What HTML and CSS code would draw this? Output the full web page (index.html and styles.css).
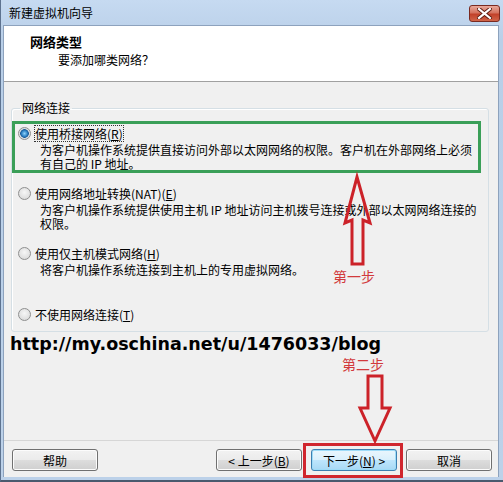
FILE: index.html
```html
<!DOCTYPE html>
<html lang="zh-CN">
<head>
    <meta charset="UTF-8">
    <title>新建虚拟机向导</title>
    <link rel="stylesheet" href="styles.css">
</head>
<body>
    <div class="window">
        <div class="titlebar">
            <span class="title">新建虚拟机向导</span>
            <span class="close">
                <svg width="15" height="11" viewBox="0 0 15 11">
                    <path d="M2 1 L13 10 M13 1 L2 10" stroke="#5a1a10" stroke-width="4" stroke-linecap="square"/>
                    <path d="M2 1 L13 10 M13 1 L2 10" stroke="#ffffff" stroke-width="2.2" stroke-linecap="square"/>
                </svg>
            </span>
        </div>
        <div class="client">
            <div class="header">
                <div class="header-title">网络类型</div>
                <div class="header-sub">要添加哪类网络？</div>
            </div>
            <div class="body">
                <fieldset class="group">
                    <legend>网络连接</legend>
                    <div class="option">
                        <div class="option-label"><span class="radio checked"></span><span class="focus">使用桥接网络(<u>R</u>)</span></div>
                        <div class="option-desc">
                            <div class="desc-line">为客户机操作系统提供直接访问外部以太网网络的权限。客户机在外部网络上必须</div>
                            <div class="desc-line">有自己的 IP 地址。</div>
                        </div>
                    </div>
                    <div class="option">
                        <div class="option-label"><span class="radio"></span><span>使用网络地址转换(NAT)(<u>E</u>)</span></div>
                        <div class="option-desc">
                            <div class="desc-line">为客户机操作系统提供使用主机 IP 地址访问主机拨号连接或外部以太网网络连接的</div>
                            <div class="desc-line">权限。</div>
                        </div>
                    </div>
                    <div class="option">
                        <div class="option-label"><span class="radio"></span><span>使用仅主机模式网络(<u>H</u>)</span></div>
                        <div class="option-desc">
                            <div class="desc-line">将客户机操作系统连接到主机上的专用虚拟网络。</div>
                        </div>
                    </div>
                    <div class="option option-last">
                        <div class="option-label"><span class="radio"></span><span>不使用网络连接(<u>T</u>)</span></div>
                    </div>
                </fieldset>
                <div class="url">http://my.oschina.net/u/1476033/blog</div>
            </div>
            <div class="footer">
                <button class="btn">帮助</button>
                <span class="spacer"></span>
                <button class="btn">&lt; 上一步(<u>B</u>)</button>
                <button class="btn btn-default">下一步(<u>N</u>) &gt;</button>
                <button class="btn">取消</button>
            </div>
        </div>

        <!-- annotations drawn over the dialog -->
        <div class="mark-green"></div>
        <div class="mark-red"></div>
        <svg class="arrow-up" width="36" height="100" viewBox="0 0 36 100">
            <polygon points="17,7 30,53 23,50 23,94 12,94 12,50 5,53" fill="none" stroke="#cc2229" stroke-width="3"/>
        </svg>
        <div class="note note-one">第一步</div>
        <div class="note note-two">第二步</div>
        <svg class="arrow-down" width="40" height="78" viewBox="0 0 40 78">
            <polygon points="13,6 27,6 27,38 35,38 20,71 5,38 13,38" fill="none" stroke="#cc2229" stroke-width="3"/>
        </svg>
    </div>
</body>
</html>
```

FILE: styles.css
```css
body {
    margin: 0;
    font-family: "Noto Sans CJK SC", "DejaVu Sans", sans-serif;
    font-size: 12px;
    color: #000;
    background: #fff;
}
.window {
    position: relative;
    width: 503px;
    height: 482px;
    box-sizing: border-box;
    padding: 0 4px 3px 3px;
    background: linear-gradient(#c6daf1, #b9cfe8 40px, #bcd1e9);
    border-left: 1px solid #5e7390;
    border-bottom: 2px solid #4a5a6e;
    display: flex;
    flex-direction: column;
}
.titlebar {
    height: 25px;
    display: flex;
    align-items: center;
    margin-left: -1px;
}
.title {
    margin-left: 6px;
    flex: 1;
    line-height: 16px;
}
.close {
    width: 31px;
    height: 17px;
    margin-right: -1px;
    margin-top: 2px;
    box-sizing: border-box;
    border: 1px solid #7a2a20;
    border-radius: 3px;
    background: linear-gradient(#e9a99b, #d5735f 45%, #c2412a 55%, #d0654a);
    display: flex;
    align-items: center;
    justify-content: center;
}
.client {
    flex: 1;
    display: flex;
    flex-direction: column;
    background: #f0f0f0;
    border: 1px solid #8da2bd;
    border-bottom: none;
    margin-left: -1px;
}
.header {
    height: 56px;
    box-sizing: border-box;
    background: #fff;
    border-bottom: 1px solid #a0a0a0;
    padding: 8px 0 0 26px;
}
.header-title {
    font-weight: bold;
    font-size: 13px;
    line-height: 16px;
}
.header-sub {
    line-height: 16px;
    margin: 2px 0 0 28px;
}
.body {
    flex: 1;
}
.group {
    margin: 18px 9px 0 7px;
    padding: 0 6px 9px 6px;
    border: 1px solid #d5dfe5;
    border-radius: 3px;
    box-shadow: inset 1px 1px 0 #fff;
}
.group legend {
    padding: 0 2px;
    margin-left: 2px;
    line-height: 16px;
}
.option {
    margin-top: 14px;
}
.option:first-of-type {
    margin-top: 9px;
}
.option-last {
    margin-top: 29px;
}
.option-label {
    display: flex;
    align-items: center;
    height: 16px;
}
.radio {
    width: 13px;
    height: 13px;
    box-sizing: border-box;
    border: 1px solid #8e8f8f;
    border-radius: 50%;
    background: radial-gradient(circle at 50% 40%, #f6f6f6, #d4d4d4);
    margin-right: 4px;
}
.radio.checked {
    background: radial-gradient(circle, #8fd3fb 0, #2b7ec2 3px, #1b5a96 4px, #d8dde2 4.6px, #f4f4f4);
}
.focus {
    outline: 1px dotted #333;
    outline-offset: 0;
    line-height: 15px;
}
.option-desc {
    margin: 2px 0 0 22px;
}
.desc-line {
    height: 14px;
    line-height: 14px;
    white-space: nowrap;
}
.url {
    margin: 1px 0 0 6px;
    font-family: "DejaVu Sans", sans-serif;
    font-weight: bold;
    font-size: 17.5px;
    line-height: 22px;
    color: #000;
}
.footer {
    display: flex;
    gap: 9px;
    border-top: 1px solid #d6d6d6;
    padding: 8px 6px 6px 8px;
}
.spacer {
    flex: 1;
}
.btn {
    width: 86px;
    height: 22px;
    padding: 0;
    font: inherit;
    color: #000;
    border: 1px solid #707070;
    border-radius: 3px;
    background: linear-gradient(#f2f2f2, #ebebeb 50%, #dddddd 51%, #cfcfcf);
    box-shadow: inset 0 0 0 1px #fcfcfc;
}
.btn-default {
    border-color: #3c7fb1;
    background: linear-gradient(#eaf6fd, #d9f0fc 50%, #bee6fd 51%, #a7d9f5);
    box-shadow: inset 0 0 0 1px #9edcf8;
}
.mark-green {
    position: absolute;
    left: 11px;
    top: 121px;
    width: 463px;
    height: 46px;
    border: 3px solid #3a9f58;
}
.mark-red {
    position: absolute;
    left: 302px;
    top: 443px;
    width: 94px;
    height: 29px;
    border: 3px solid #d0262e;
}
.arrow-up {
    position: absolute;
    left: 339px;
    top: 170px;
}
.arrow-down {
    position: absolute;
    left: 354px;
    top: 370px;
}
.note {
    position: absolute;
    color: #d23a3c;
    font-size: 14px;
    line-height: 16px;
}
.note-one {
    left: 332px;
    top: 268px;
}
.note-two {
    left: 341px;
    top: 356px;
}
```
